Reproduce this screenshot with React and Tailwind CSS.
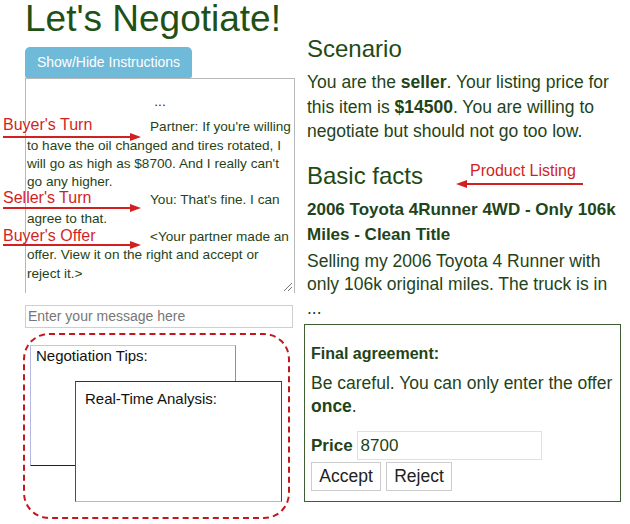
export default function App() {
  const messages = [
    "Partner: If you're willing to have the oil changed and tires rotated, I will go as high as $8700. And I really can't go any higher.",
    "You: That's fine. I can agree to that.",
    "<Your partner made an offer. View it on the right and accept or reject it.>",
  ];

  const notes = [
    { label: "Buyer's Turn", top: "top-[117px]", arrow: "top-[132px]" },
    { label: "Seller's Turn", top: "top-[190px]", arrow: "top-[203px]" },
    { label: "Buyer's Offer", top: "top-[228px]", arrow: "top-[240px]" },
  ];

  return (
    <div className="relative h-[524px] w-[630px] overflow-hidden bg-white font-['Liberation_Sans',Arial,sans-serif] text-[#1f4419]">
      <div className="flex">
        {/* left column: chat */}
        <div className="ml-[25px] w-[270px]">
          <h1 className="pt-[1px] text-[37px] leading-[36px] text-[#1f5015]">Let's Negotiate!</h1>

          <button
            type="button"
            className="mt-[10px] flex h-[31px] w-[167px] items-center justify-center rounded-t-[5px] rounded-b-[2px] bg-[#6fb9d9] text-[14px] text-white"
          >
            Show/Hide Instructions
          </button>

          <div className="relative h-[215px] w-[270px] border-x border-t border-[#b8b8b8] pl-[1px] pr-[1px] pt-[14px] text-[13.6px] leading-[18.3px]">
            <div className="text-center text-[#222]">...</div>
            <div className="mt-[7px]">
              {messages.map((m) => (
                <div key={m} className="indent-[123px]">
                  {m}
                </div>
              ))}
            </div>
            <svg className="absolute bottom-[1px] right-[1px]" width="10" height="10" viewBox="0 0 10 10">
              <path d="M1 9 L9 1 M5 9 L9 5" stroke="#777" strokeWidth="1" />
            </svg>
          </div>

          <div className="mt-[12px] flex h-[23px] w-[268px] items-center border border-[#cfcfcf] px-[2px] text-[14px] text-[#777]">
            Enter your message here
          </div>

          <div className="ml-[-2px] mt-[5px] h-[186px] w-[267px] rounded-[26px] border-2 border-dashed border-[#c3171c] pl-[5px] pt-[10px]">
            <div className="h-[121px] w-[206px] border border-b-[#1c1c44] border-l-[#b7b7e6] border-r-[#8a90a8] border-t-[#c4c4ee] pl-[5px] pt-[1px] text-[15px] leading-[17px] text-[#111]">
              Negotiation Tips:
            </div>
            <div className="relative ml-[45px] mt-[-85px] h-[121px] w-[207px] border border-b-[#b4b4e8] border-l-[#4a4a70] border-r-[#444] border-t-[#333] bg-white pl-[9px] pt-[8px] text-[15px] leading-[17px] text-[#111]">
              Real-Time Analysis:
            </div>
          </div>
        </div>

        {/* right column: scenario */}
        <div className="ml-[9px] w-[322px]">
          <div className="pl-[3px]">
            <h2 className="mt-[35px] text-[24px] leading-[28px] text-[#1f4a16]">Scenario</h2>
            <p className="mt-[7px] text-[17.5px] leading-[24.5px]">
              You are the <b>seller</b>. Your listing price for this item is <b>$14500</b>. You are willing to negotiate but should not go too low.
            </p>
            <h2 className="mt-[18px] text-[24px] leading-[28px] text-[#1f4a16]">Basic facts</h2>
            <p className="mt-[7px] text-[17px] font-bold leading-[25px]">2006 Toyota 4Runner 4WD - Only 106k Miles - Clean Title</p>
            <p className="mt-[3px] pr-[4px] text-[17.5px] leading-[23.5px]">
              Selling my 2006 Toyota 4 Runner with only 106k original miles. The truck is in
              <br />
              ...
            </p>
          </div>

          <div className="mt-[4px] h-[178px] w-[317px] border border-[#3f5e31] pl-[6px] pt-[19px]">
            <div className="text-[16px] font-bold leading-[20px]">Final agreement:</div>
            <p className="mt-[8px] text-[17.5px] leading-[23px]">
              Be careful. You can only enter the offer <b>once</b>.
            </p>
            <div className="mt-[13px] flex items-center gap-[4px]">
              <span className="text-[17px] font-bold">Price</span>
              <div className="flex h-[29px] w-[185px] items-center border border-[#e0e0e0] pl-[3px] text-[17px]">8700</div>
            </div>
            <div className="mt-[2px] flex gap-[5px]">
              <button type="button" className="h-[29px] w-[70px] border border-[#ccc] bg-white text-[17.5px] text-[#222]">
                Accept
              </button>
              <button type="button" className="h-[29px] w-[66px] border border-[#ccc] bg-white text-[17.5px] text-[#222]">
                Reject
              </button>
            </div>
          </div>
        </div>
      </div>

      {/* red annotations */}
      {notes.map((n) => (
        <div key={n.label}>
          <div className={`absolute left-[3px] ${n.top} text-[16px] leading-[16px] text-[#d21f1f]`}>{n.label}</div>
          <svg className={`absolute left-[3px] ${n.arrow}`} width="140" height="10" viewBox="0 0 140 10">
            <line x1="0" y1="5" x2="130" y2="5" stroke="#d21f1f" strokeWidth="2" />
            <polygon points="127,1 138,5 127,9" fill="#d21f1f" />
          </svg>
        </div>
      ))}
      <div className="absolute left-[470px] top-[163px] text-[16px] leading-[16px] text-[#d21f1f]">Product Listing</div>
      <svg className="absolute left-[455px] top-[179px]" width="130" height="10" viewBox="0 0 130 10">
        <line x1="10" y1="5" x2="128" y2="5" stroke="#d21f1f" strokeWidth="2" />
        <polygon points="12,1 1,5 12,9" fill="#d21f1f" />
      </svg>
    </div>
  );
}
